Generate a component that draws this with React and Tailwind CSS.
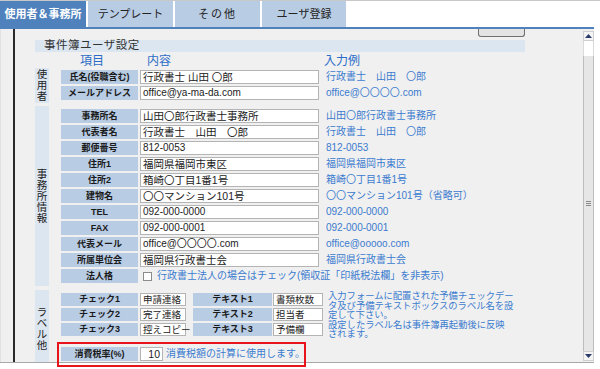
import React from "react";

const FONT = "font-['Liberation_Sans','Noto_Sans_CJK_JP',sans-serif]";

function VLabel({ text, className = "" }) {
  return (
    <div className={`w-[14px] shrink-0 bg-[#dce6f1] flex flex-col items-center justify-center text-[10.5px] leading-[11px] text-[#222] ${className}`}>
      {text.split("").map((c, i) => (
        <span key={i}>{c}</span>
      ))}
    </div>
  );
}

function Label({ children, w = "w-[77px]" }) {
  return (
    <div className={`${w} h-full shrink-0 bg-[#b8cce4] flex items-center justify-center text-[9px] font-bold text-[#1a1a1a] leading-none whitespace-nowrap`}>
      {children}
    </div>
  );
}

function Row({ label, value, example, small }) {
  return (
    <div className="flex items-center h-[14px]">
      <Label>{label}</Label>
      <div className={`ml-[2px] w-[179px] h-full bg-white border border-[#b4b4b4] flex items-center px-[2px] ${small ? "text-[10px]" : "text-[10.5px]"} text-[#222] leading-none whitespace-nowrap`}>
        {value}
      </div>
      <div className="ml-[7px] text-[10px] text-[#3b7bcf] whitespace-nowrap leading-none">{example}</div>
    </div>
  );
}

function SmallRow({ l1, v1, l2, v2 }) {
  return (
    <div className="flex items-center h-[13px]">
      <Label>{l1}</Label>
      <div className="ml-[2px] w-[46px] h-full bg-white border border-[#b4b4b4] flex items-center px-[2px] text-[9.5px] text-[#222] leading-none whitespace-nowrap">{v1}</div>
      <div className="ml-[7px] h-full">
        <Label w="w-[79px]">{l2}</Label>
      </div>
      <div className="ml-[1px] w-[50px] h-full bg-white border border-[#b4b4b4] flex items-center px-[2px] text-[9.5px] text-[#222] leading-none whitespace-nowrap">{v2}</div>
    </div>
  );
}

function Tri({ up }) {
  return (
    <svg width="7" height="4" viewBox="0 0 7 4">
      {up ? <polygon points="0,4 7,4 3.5,0" fill="#2b3a67" /> : <polygon points="0,0 7,0 3.5,4" fill="#2b3a67" />}
    </svg>
  );
}

export default function App() {
  const group2 = [
    ["事務所名", "山田〇郎行政書士事務所", "山田〇郎行政書士事務所"],
    ["代表者名", "行政書士　山田　〇郎", "行政書士　山田　〇郎"],
    ["郵便番号", "812-0053", "812-0053", true],
    ["住所1", "福岡県福岡市東区", "福岡県福岡市東区"],
    ["住所2", "箱崎〇丁目1番1号", "箱崎〇丁目1番1号"],
    ["建物名", "〇〇マンション101号", "〇〇マンション101号（省略可）"],
    ["TEL", "092-000-0000", "092-000-0000", true],
    ["FAX", "092-000-0001", "092-000-0001", true],
    ["代表メール", "office@〇〇〇〇.com", "office@ooooo.com", true],
    ["所属単位会", "福岡県行政書士会", "福岡県行政書士会"],
  ];

  return (
    <div className={`w-[600px] h-[369px] bg-white overflow-hidden ${FONT}`}>
      {/* tabs */}
      <div className="h-[27px] border-t border-[#c8c8c8] flex gap-[2px]">
        <div className="w-[86px] bg-[#4f81bd] text-white font-bold text-[11px] flex items-center justify-center whitespace-nowrap">使用者＆事務所</div>
        <div className="w-[85px] bg-[#b8cce4] text-[#222] text-[11px] flex items-center justify-center">テンプレート</div>
        <div className="w-[85px] bg-[#b8cce4] text-[#222] text-[11px] flex items-center justify-center tracking-[2px]">その他</div>
        <div className="w-[84px] bg-[#b8cce4] text-[#222] text-[11px] flex items-center justify-center">ユーザ登録</div>
      </div>
      <div className="w-[594px] h-[2px] bg-[#4f81bd]" />
      {/* panel */}
      <div className="w-[594px] h-[333px] flex bg-[#f0f0f0]">
        <div className="w-[13px] shrink-0 border-l border-[#e2e2e2]" />
        <div className="w-[2px] shrink-0 bg-[#2a2a2a]" />
        <div className="flex-1 pl-[20px] flex flex-col">
          {/* partially scrolled-off button */}
          <div className="h-[8px] flex">
            <div className="ml-[443px] w-[47px] h-[8px] bg-[#e3e3e3] border-x border-b border-[#6f6f6f] rounded-b-[3px] overflow-hidden flex justify-center">
              <span className="-mt-[11px] text-[11px] leading-[12px] text-[#222]">設定</span>
            </div>
          </div>
          <div className="mt-[3px] w-[490px] h-[12px] bg-[#dce6f1] flex items-center pl-[9px] text-[11.5px] leading-none text-[#333] tracking-[0.5px]">事件簿ユーザ設定</div>
          <div className="mt-[2px] h-[14px] flex items-center text-[12px] leading-none text-[#2a6cc7]">
            <span className="ml-[45px]">項目</span>
            <span className="ml-[43px]">内容</span>
            <span className="ml-[153px]">入力例</span>
          </div>
          {/* group 1 */}
          <div className="flex">
            <VLabel text="使用者" />
            <div className="ml-[12px] pt-[2px] pb-[3px] flex flex-col gap-[2px]">
              <Row label="氏名(役職含む)" value="行政書士 山田 〇郎" example="行政書士　山田　〇郎" />
              <Row label="メールアドレス" value="office@ya-ma-da.com" example="office@〇〇〇〇.com" small />
            </div>
          </div>
          {/* group 2 */}
          <div className="mt-[3px] flex">
            <VLabel text="事務所情報" />
            <div className="ml-[12px] pt-[3px] pb-[3px] flex flex-col gap-[2px]">
              {group2.map(([l, v, e, s]) => (
                <Row key={l} label={l} value={v} example={e} small={s} />
              ))}
              <div className="flex items-center h-[14px]">
                <Label>法人格</Label>
                <div className="ml-[5px] w-[9px] h-[9px] bg-white border border-[#8c8c8c]" />
                <div className="ml-[5px] text-[10px] leading-none text-[#3b7bcf] whitespace-nowrap">行政書士法人の場合はチェック(領収証「印紙税法欄」を非表示)</div>
              </div>
            </div>
          </div>
          {/* group 3 */}
          <div className="mt-[4px] h-[72px] flex">
            <VLabel text="ラベル他" className="pt-[6px]" />
            <div className="ml-[12px] pt-[3px] flex flex-col">
              <div className="h-[43px] flex">
                <div className="flex flex-col gap-[2px]">
                  <SmallRow l1="チェック1" v1="申請連絡" l2="テキスト1" v2="書類枚数" />
                  <SmallRow l1="チェック2" v1="完了連絡" l2="テキスト2" v2="担当者" />
                  <SmallRow l1="チェック3" v1="控えコピー" l2="テキスト3" v2="予備欄" />
                </div>
                <div className="ml-[5px] -mt-[1px] text-[9.3px] leading-[9.5px] text-[#3b7bcf] whitespace-nowrap">
                  入力フォームに配置された予備チェックデー<br />
                  タ及び予備テキストボックスのラベル名を設<br />
                  定して下さい。<br />
                  設定したラベル名は事件簿再起動後に反映<br />
                  されます。
                </div>
              </div>
              <div className="relative mt-[11px] h-[14px] flex items-center">
                <Label>消費税率(%)</Label>
                <div className="ml-[2px] w-[23px] h-full bg-white border border-[#b4b4b4] flex items-center justify-end px-[2px] text-[10.5px] text-[#222] leading-none">10</div>
                <div className="ml-[3px] text-[10px] leading-none text-[#3b7bcf] whitespace-nowrap">消費税額の計算に使用します。</div>
                <div className="absolute -left-[4px] -top-[5px] w-[249px] h-[25px] border-[2.5px] border-[#e8141c]" />
              </div>
            </div>
          </div>
        </div>
        {/* scrollbar */}
        <div className="w-[11px] shrink-0 flex flex-col pt-[2px] pb-[1px] bg-[#f0f0f0]">
          <div className="h-[10px] bg-[#f4f4f4] border border-[#cfcfcf] flex items-center justify-center"><Tri up /></div>
          <div className="h-[15px] bg-white border-x border-[#dadada]" />
          <div className="flex-1 bg-[#e6e6e6] border-x border-[#bdbdbd] flex items-center justify-center">
            <div className="flex flex-col gap-[1px]">
              <div className="w-[5px] h-px bg-[#8a8a8a]" />
              <div className="w-[5px] h-px bg-[#8a8a8a]" />
              <div className="w-[5px] h-px bg-[#8a8a8a]" />
            </div>
          </div>
          <div className="h-[10px] bg-[#f4f4f4] border border-[#cfcfcf] flex items-center justify-center"><Tri /></div>
        </div>
      </div>
      <div className="w-[594px] h-px bg-[#a8a8a8]" />
    </div>
  );
}
